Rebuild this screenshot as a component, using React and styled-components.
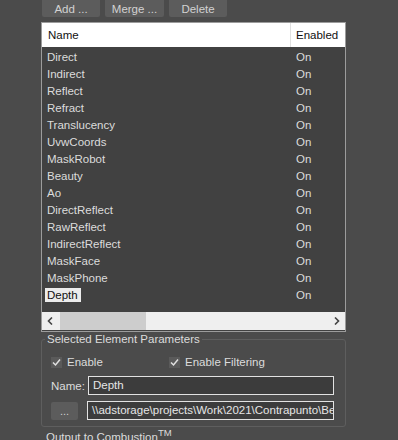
import React from 'react';
import styled, { createGlobalStyle } from 'styled-components';

const Global = createGlobalStyle`
    html, body {
        margin: 0;
        padding: 0;
        background: #4b4b4b;
        font-family: "Liberation Sans", Arial, sans-serif;
        font-size: 11px;
        color: #dcdcdc;
        overflow: hidden;
    }
`;

const Panel = styled.div`
    width: 305px;
    padding-left: 41px;
    height: 440px;
`;

const Toolbar = styled.div`
    display: flex;
    gap: 5px;
    margin-left: 1px;
    height: 17px;
`;

const Button = styled.div`
    width: ${p => p.w}px;
    height: 17px;
    background: #5c5c5c;
    border-radius: 0 0 2px 2px;
    color: #d2d2d2;
    display: flex;
    align-items: center;
    justify-content: center;
    font-size: 11.5px;
`;

const List = styled.div`
    margin-top: 5px;
    border: 1px solid #9c9c9c;
    background: #414141;
    height: 308px;
    display: flex;
    flex-direction: column;
`;

const Header = styled.div`
    display: grid;
    grid-template-columns: 248px 1fr;
    background: #fff;
    color: #111;
    height: 24px;
    font-size: 11.5px;
`;

const HeadCell = styled.div`
    display: flex;
    align-items: center;
    padding-left: ${p => p.pad}px;
    border-left: ${p => (p.sep ? '1px solid #e0e0e0' : 'none')};
`;

const Rows = styled.div`
    flex: 1;
    padding-top: 1px;
`;

const Row = styled.div`
    display: grid;
    grid-template-columns: 248px 1fr;
    height: 17px;
    align-items: center;
    font-size: 11.5px;
`;

const NameCell = styled.div`
    padding-left: 5px;
`;

const Label = styled.span`
    display: inline-block;
    padding: 1px 3px 1px 2px;
    margin-left: -2px;
    background: ${p => (p.sel ? '#ececec' : 'transparent')};
    color: ${p => (p.sel ? '#111' : '#dcdcdc')};
`;

const StateCell = styled.div`
    padding-left: 6px;
`;

const HScroll = styled.div`
    height: 18px;
    background: #efefef;
    display: flex;
    align-items: center;
    margin-bottom: 1px;
`;

const Arrow = styled.div`
    width: 16px;
    display: flex;
    justify-content: center;
    color: #444;
`;

const Track = styled.div`
    flex: 1;
    height: 100%;
    display: flex;
    align-items: stretch;
`;

const Thumb = styled.div`
    width: 86px;
    margin-left: 2px;
    background: #cdcdcd;
`;

const Group = styled.fieldset`
    margin: 1px 0 0 0;
    min-width: 0;
    padding: 11px 11px 6px 9px;
    border: 1px solid #5e5e5e;
    border-radius: 3px;
    display: flex;
    flex-direction: column;
    gap: 6px;
`;

const Legend = styled.legend`
    padding: 0 2px;
    margin-left: -6px;
    font-size: 11.5px;
    color: #dcdcdc;
`;

const CheckRow = styled.div`
    display: flex;
    align-items: center;
    height: 12px;
    margin-bottom: 2px;
`;

const Check = styled.label`
    display: flex;
    align-items: center;
    gap: 5px;
    width: ${p => p.w}px;
    font-size: 11.5px;
`;

const Box = styled.span`
    width: 11px;
    height: 11px;
    background: #5a5a5a;
    display: flex;
    align-items: center;
    justify-content: center;
`;

const FieldRow = styled.div`
    display: flex;
    align-items: center;
    gap: 8px;
`;

const FieldLabel = styled.span`
    width: 29px;
    font-size: 11.5px;
`;

const Input = styled.div`
    flex: 1;
    min-width: 0;
    height: 15px;
    border: 1px solid #e2e2e2;
    background: #3c3c3c;
    color: #e6e6e6;
    padding: 1px 4px;
    font-size: 11.5px;
    white-space: nowrap;
    overflow: hidden;
    line-height: 15px;
`;

const SmallButton = styled.div`
    width: 27px;
    height: 18px;
    background: #5c5c5c;
    border-radius: 2px;
    display: flex;
    align-items: center;
    justify-content: center;
    color: #cfcfcf;
    margin-right: 1px;
`;

const Footer = styled.div`
    margin-top: 0;
    margin-left: 5px;
    font-size: 11.5px;
`;

const elements = [
    'Direct', 'Indirect', 'Reflect', 'Refract', 'Translucency', 'UvwCoords',
    'MaskRobot', 'Beauty', 'Ao', 'DirectReflect', 'RawReflect',
    'IndirectReflect', 'MaskFace', 'MaskPhone', 'Depth',
];

const Tick = () => (
    <svg width="9" height="9" viewBox="0 0 9 9">
        <path d="M1 4.5 L3.5 7 L8 1.5" fill="none" stroke="#e0e0e0" strokeWidth="1.5" />
    </svg>
);

const App = () => (
    <Panel>
        <Global />
        <Toolbar>
            <Button w={58}>Add ...</Button>
            <Button w={59}>Merge ...</Button>
            <Button w={58}>Delete</Button>
        </Toolbar>
        <List>
            <Header>
                <HeadCell pad={6}>Name</HeadCell>
                <HeadCell pad={5} sep>Enabled</HeadCell>
            </Header>
            <Rows>
                {elements.map(name => (
                    <Row key={name}>
                        <NameCell>
                            <Label sel={name === 'Depth'}>{name}</Label>
                        </NameCell>
                        <StateCell>On</StateCell>
                    </Row>
                ))}
            </Rows>
            <HScroll>
                <Arrow>
                    <svg width="6" height="8" viewBox="0 0 6 8">
                        <path d="M5 0.5 L1.5 4 L5 7.5" fill="none" stroke="#444" strokeWidth="1.6" />
                    </svg>
                </Arrow>
                <Track><Thumb /></Track>
                <Arrow>
                    <svg width="6" height="8" viewBox="0 0 6 8">
                        <path d="M1 0.5 L4.5 4 L1 7.5" fill="none" stroke="#444" strokeWidth="1.6" />
                    </svg>
                </Arrow>
            </HScroll>
        </List>
        <Group>
            <Legend>Selected Element Parameters</Legend>
            <CheckRow>
                <Check w={118}><Box><Tick /></Box>Enable</Check>
                <Check w={150}><Box><Tick /></Box>Enable Filtering</Check>
            </CheckRow>
            <FieldRow>
                <FieldLabel>Name:</FieldLabel>
                <Input>Depth</Input>
            </FieldRow>
            <FieldRow>
                <SmallButton>...</SmallButton>
                <Input>\\adstorage\projects\Work\2021\Contrapunto\Beeline</Input>
            </FieldRow>
        </Group>
        <Footer>Output to Combustion<sup>TM</sup></Footer>
    </Panel>
);

export default App;
